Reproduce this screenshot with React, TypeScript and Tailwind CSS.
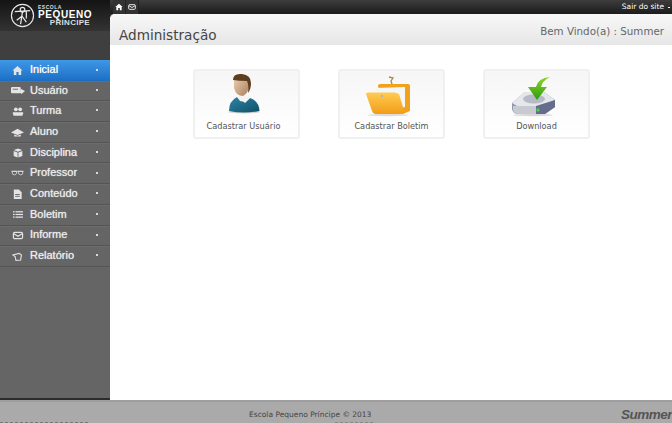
import React from 'react';

const sans = "font-['DejaVu_Sans',sans-serif]";

const HomeIcon = () => (
  <svg viewBox="0 0 12 12" className="w-[11px] h-[11px]" fill="currentColor">
    <path d="M6 1 L11.5 6 L10 6 L10 11 L7.2 11 L7.2 7.5 L4.8 7.5 L4.8 11 L2 11 L2 6 L.5 6 Z" />
  </svg>
);

const MailIcon = () => (
  <svg viewBox="0 0 12 12" className="w-[12px] h-[11px]" fill="none" stroke="currentColor" strokeWidth="1.3">
    <rect x="1" y="2.5" width="10" height="7" rx="1.5" />
    <path d="M1.5 4 L6 6.8 L10.5 4" />
  </svg>
);

const UserCardIcon = () => (
  <svg viewBox="0 0 16 12" className="w-[14px] h-[11px]" fill="currentColor">
    <rect x="0" y="2" width="11" height="7" rx="1" />
    <path d="M11 4 L16 6.5 L12 10 L10 8 Z" />
    <rect x="2" y="4" width="6" height="1" fill="#666" />
  </svg>
);

const GroupIcon = () => (
  <svg viewBox="0 0 14 12" className="w-[12px] h-[11px]" fill="currentColor">
    <circle cx="4.5" cy="3.5" r="2.2" />
    <circle cx="9.5" cy="3.5" r="2.2" />
    <path d="M1 7 h12 v1.5 l-1 2.5 h-10 l-1-2.5 Z" />
  </svg>
);

const CapIcon = () => (
  <svg viewBox="0 0 16 12" className="w-[13px] h-[11px]" fill="currentColor">
    <path d="M8 1.5 L16 6 L8 9 L0 6 Z" />
    <path d="M4 8.5 L8 10 L12 8.5 L12 11 L4 11 Z" />
  </svg>
);

const BoxIcon = () => (
  <svg viewBox="0 0 12 12" className="w-[10px] h-[12px]" fill="currentColor">
    <path d="M6 .5 L11 2.5 L6 4.5 L1 2.5 Z" />
    <path d="M.8 3.5 L5.5 5.5 L5.5 11.5 L.8 9.5 Z" />
    <path d="M11.2 3.5 L6.5 5.5 L6.5 11.5 L11.2 9.5 Z" />
  </svg>
);

const GlassesIcon = () => (
  <svg viewBox="0 0 14 8" className="w-[13px] h-[7px]" fill="none" stroke="currentColor" strokeWidth="0.9">
    <path d="M0 1.5 H14" />
    <path d="M1 1.5 H6 V3.5 Q5.5 5.5 3.5 5.5 Q1 5.5 1 3.5 Z" />
    <path d="M8 1.5 H13 V3.5 Q13 5.5 10.5 5.5 Q8.5 5.5 8 3.5 Z" />
  </svg>
);

const FileIcon = () => (
  <svg viewBox="0 0 12 12" className="w-[11px] h-[12px]" fill="currentColor">
    <path d="M2 1 H7.5 L10.5 4 V11.5 H2 Z" />
    <rect x="3.5" y="6" width="5" height="1" fill="#666" />
    <rect x="3.5" y="8" width="5" height="1" fill="#666" />
  </svg>
);

const ListIcon = () => (
  <svg viewBox="0 0 12 10" className="w-[10px] h-[9px]" fill="currentColor">
    <rect x="0" y="1" width="2" height="1.5" />
    <rect x="3" y="1" width="9" height="1.5" />
    <rect x="0" y="4.2" width="2" height="1.5" />
    <rect x="3" y="4.2" width="9" height="1.5" />
    <rect x="0" y="7.4" width="2" height="1.5" />
    <rect x="3" y="7.4" width="9" height="1.5" />
  </svg>
);

const ReportIcon = () => (
  <svg viewBox="0 0 14 12" className="w-[11px] h-[11px]" fill="none" stroke="currentColor" strokeWidth="1.4">
    <path d="M1 4 L9 2 L12 4 L11 10.5 L5 11 L4 6 Z" />
  </svg>
);

const menu = [
  { label: 'Inicial', icon: HomeIcon },
  { label: 'Usuário', icon: UserCardIcon },
  { label: 'Turma', icon: GroupIcon },
  { label: 'Aluno', icon: CapIcon },
  { label: 'Disciplina', icon: BoxIcon },
  { label: 'Professor', icon: GlassesIcon },
  { label: 'Conteúdo', icon: FileIcon },
  { label: 'Boletim', icon: ListIcon },
  { label: 'Informe', icon: MailIcon },
  { label: 'Relatório', icon: ReportIcon },
];

const Logo = () => (
  <svg viewBox="0 0 26 26" className="w-[25px] h-[25px] shrink-0" fill="none" stroke="#e8e8e8">
    <circle cx="13" cy="13" r="11.5" strokeWidth="1.2" />
    <circle cx="13" cy="7" r="2.4" strokeWidth="1.2" />
    <path d="M5 9 L21 8 M13 9 L11 22 M12 14 L7 18 M12 13 L17 20 M17 8 V16" strokeWidth="1.3" />
  </svg>
);

const PersonArt = () => (
  <svg viewBox="-25 1 103 47" className="w-[103px] h-[47px]">
    <defs>
      <linearGradient id="skin" x1="0" y1="0" x2="1" y2="1">
        <stop offset="0" stopColor="#edd3b6" />
        <stop offset="1" stopColor="#a97f5c" />
      </linearGradient>
      <linearGradient id="shirt" x1="0" y1="0" x2="1" y2="1">
        <stop offset="0" stopColor="#2c86a6" />
        <stop offset="1" stopColor="#0f4f68" />
      </linearGradient>
    </defs>
    <ellipse cx="24" cy="42" rx="16" ry="1.5" fill="#d4d4d4" />
    <path d="M9 41 Q9 31 17 27 L21 29 L25 33 L30 28 Q39 31 39.5 41 Q24 44 9 41 Z" fill="url(#shirt)" />
    <path d="M17 27 L21 25 L29 25 L30 28 L25 32 L20 31 Z" fill="#f4f4f4" />
    <path d="M14 9 Q14 5 21 5 Q29 6 29 14 Q29 23 23 26 Q16 26 14 18 Z" fill="url(#skin)" />
    <path d="M13 10 Q13 3 22 4 Q31 5 31 13 Q31 19 28 23 Q29 15 27 11 Q19 11 13 10 Z" fill="#5f3d1f" />
  </svg>
);

const FolderArt = () => (
  <svg viewBox="-15 1 103 47" className="w-[103px] h-[47px]">
    <defs>
      <linearGradient id="fold" x1="0" y1="0" x2="0" y2="1">
        <stop offset="0" stopColor="#ffcb52" />
        <stop offset="1" stopColor="#f29c16" />
      </linearGradient>
    </defs>
    <ellipse cx="33" cy="45" rx="21" ry="1.2" fill="#dcdcdc" />
    <path d="M34 7 L38 8 L36 11 L37 14" fill="none" stroke="#a98a4a" strokeWidth="1.3" />
    <path d="M23 16 Q23 14 25 14 H53 Q55 14 55 16 V41 L48 44 H30 Z" fill="#f0a21c" />
    <path d="M20 18 L50 17 V37 L46 38 H24 Z" fill="#f6f6f6" />
    <path d="M11 24 Q11 22.5 13 22.5 H40 L44 24 L48 37 Q49 44 44 44 H20 Q18 44 17 41 Z" fill="url(#fold)" />
    <circle cx="27" cy="26" r="1.3" fill="#a8b8c4" />
  </svg>
);

const DriveArt = () => (
  <svg viewBox="-15 1 103 47" className="w-[103px] h-[47px]">
    <defs>
      <linearGradient id="arrow" x1="0" y1="0" x2="0" y2="1">
        <stop offset="0" stopColor="#8ad62a" />
        <stop offset="1" stopColor="#2f9a10" />
      </linearGradient>
    </defs>
    <ellipse cx="33" cy="45" rx="20" ry="1.2" fill="#d8d8d8" />
    <path d="M12 33 L25 22 H44 L55 30 V37 L45 44 H18 Q13 44 12 39 Z" fill="#9097ae" />
    <path d="M12 33 L25 22 H44 L55 30 L44 36 H17 Z" fill="#e6e7ec" />
    <ellipse cx="34" cy="29" rx="11" ry="4.5" fill="#b6bac6" />
    <path d="M13 36 H36 V44 H18 Q14 44 13 40 Z" fill="#c8cad2" />
    <path d="M36 36 L55 30 V37 L45 44 H36 Z" fill="#666d8c" />
    <circle cx="38" cy="40" r="1.7" fill="#3fd24a" />
    <path d="M50 7 Q38 8 36 17 L28 17 L37 30 L47 17 L41 17 Q42 11 50 7 Z" fill="url(#arrow)" />
  </svg>
);

const shortcuts = [
  { label: 'Cadastrar Usuário', art: PersonArt, labelClass: 'pr-[6px]' },
  { label: 'Cadastrar Boletim', art: FolderArt, labelClass: '' },
  { label: 'Download', art: DriveArt, labelClass: '' },
];

export default function App() {
  return (
    <div className={`w-[672px] h-[423px] overflow-hidden flex flex-col bg-[#3a3a3a] ${sans}`}>
      <div className="flex flex-1 min-h-0">
        {/* sidebar */}
        <aside className="w-[110px] shrink-0 flex flex-col bg-[#656565] border-b-2 border-[#2c2c2c]">
          <div className="h-[31px] bg-gradient-to-b from-[#141414] to-[#333] flex items-center pl-[10px] gap-[3px]">
            <Logo />
            <div className="flex flex-col w-[54px] font-['Liberation_Sans',sans-serif] font-bold text-white">
              <span className="text-[5px] leading-[5px] tracking-[0.5px] text-[#ddd]">ESCOLA</span>
              <span className="text-[10px] leading-[9px] tracking-[0.6px]">PEQUENO</span>
              <span className="text-[8px] leading-[8px] self-end pr-[2px] tracking-[0.3px] text-[#ddd]">PRÍNCIPE</span>
            </div>
          </div>
          <div className="h-[29px] bg-[#3f3f3f]" />
          {menu.map((item, i) => (
            <div
              key={item.label}
              className={`h-[20.7px] shrink-0 flex items-center pb-[1.5px] ${
                i === 0
                  ? 'bg-gradient-to-b from-[#3f97e6] to-[#1a6fc4] text-white'
                  : 'border-b border-[#555] shadow-[inset_0_1px_0_#6c6c6c] text-[#ececec]'
              }`}
            >
              <span className="w-[30px] flex justify-center pl-[5px] mt-[2px] shrink-0 text-[#e4e4e4]">
                <item.icon />
              </span>
              <span className="flex-1 font-['Liberation_Sans',sans-serif] text-[11px] [text-shadow:0_0_1px_#ddd]">{item.label}</span>
              <span className="w-[2px] h-[2px] rounded-full bg-white mr-[12px]" />
            </div>
          ))}
        </aside>

        {/* content */}
        <div className="flex-1 flex flex-col min-w-0">
          <div className="h-[14px] shrink-0 bg-gradient-to-b from-[#3d3d3d] to-[#1c1c1c] flex items-center text-white">
            <div className="flex pl-[3px] h-full">
              <span className="w-[13px] flex items-center justify-center bg-[#333] border-r border-[#222] [&>svg]:w-[8px] [&>svg]:h-[8px]"><HomeIcon /></span>
              <span className="w-[13px] flex items-center justify-center bg-[#333] border-r border-[#222] [&>svg]:w-[8px] [&>svg]:h-[8px]"><MailIcon /></span>
            </div>
            <span className="ml-auto text-[7.5px]">Sair do site</span>
            <span className="w-[2px] h-[1px] bg-white ml-[4px] mr-[2px]" />
          </div>
          <main className="flex-1 bg-white rounded-tl-[5px] overflow-hidden">
            <header className="h-[31px] bg-gradient-to-b from-[#f8f8f8] to-[#e6e6e6] flex items-center justify-between pl-[9px] pr-[8px]">
              <h1 className="text-[13.6px] text-[#444] pt-[12px]">Administração</h1>
              <span className="text-[10.3px] text-[#666] pt-[5px]">Bem Vindo(a) : Summer</span>
            </header>
            <div className="flex gap-[38px] pl-[83px] pt-[24px]">
              {shortcuts.map(s => (
                <div
                  key={s.label}
                  className="w-[107px] h-[70px] rounded-[3px] border-2 border-[#f0f0f0] bg-gradient-to-b from-[#f6f6f6] to-white flex flex-col items-center"
                >
                  <s.art />
                  <span className={`mt-[3px] text-[8.2px] leading-[10px] text-[#555] ${s.labelClass}`}>{s.label}</span>
                </div>
              ))}
            </div>
          </main>
        </div>
      </div>

      <footer className="h-[23px] shrink-0 bg-[#aaa] border-t-2 border-[#9e9e9e] flex items-center relative">
        <span className="ml-[249px] text-[7.5px] text-[#444] pt-[4px]">Escola Pequeno Príncipe © 2013</span>
        <span className="ml-auto text-[13.5px] leading-[13px] font-bold italic tracking-[-0.5px] text-[#555] font-['Liberation_Sans',sans-serif] pt-[3px]">Summer</span>
        <span className="absolute left-0 bottom-0 w-[88px] border-b border-dashed border-[#777]" />
        <span className="absolute left-[335px] bottom-0 w-[38px] border-b border-dashed border-[#888]" />
      </footer>
    </div>
  );
}
